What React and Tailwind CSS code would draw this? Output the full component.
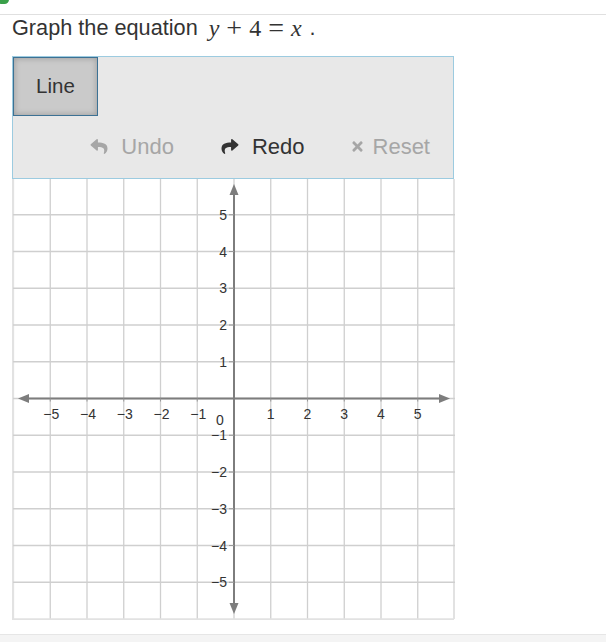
import { FaReply, FaShare, FaTimes } from 'react-icons/fa'

const CELL = 36.75
const X0 = 221
const Y0 = 219.5
const ticks = [-6, -5, -4, -3, -2, -1, 0, 1, 2, 3, 4, 5, 6]
const labels = [-5, -4, -3, -2, -1, 1, 2, 3, 4, 5]

const fmt = (n) => (n < 0 ? '\u2212' + Math.abs(n) : String(n))

const Graph = () => {
    return (
        <svg width="442" height="440" viewBox="0 0 442 440" className="block">
            {ticks.map((t) => (
                <line key={'v' + t} x1={X0 + t * CELL} y1="0" x2={X0 + t * CELL} y2="440"
                    stroke={Math.abs(t) === 6 ? '#e2e2e2' : '#cfcfcf'} strokeWidth="1.3" />
            ))}
            {ticks.map((t) => (
                <line key={'h' + t} x1="0" y1={Y0 - t * CELL} x2="442" y2={Y0 - t * CELL}
                    stroke={Math.abs(t) === 6 ? '#e2e2e2' : '#cfcfcf'} strokeWidth="1.3" />
            ))}

            {/* axes */}
            <line x1="12" y1={Y0} x2="430" y2={Y0} stroke="#7d7d7d" strokeWidth="2" />
            <line x1={X0} y1="14" x2={X0} y2="426" stroke="#7d7d7d" strokeWidth="2" />
            <polygon points={`5,${Y0} 16,${Y0 - 4.5} 16,${Y0 + 4.5}`} fill="#7d7d7d" />
            <polygon points={`437,${Y0} 426,${Y0 - 4.5} 426,${Y0 + 4.5}`} fill="#7d7d7d" />
            <polygon points={`${X0},5 ${X0 - 4.5},16 ${X0 + 4.5},16`} fill="#7d7d7d" />
            <polygon points={`${X0},435 ${X0 - 4.5},424 ${X0 + 4.5},424`} fill="#7d7d7d" />

            {labels.map((t) => (
                <line key={'tx' + t} x1={X0 + t * CELL} y1={Y0} x2={X0 + t * CELL} y2={Y0 + 3}
                    stroke="#9a9a9a" strokeWidth="1" />
            ))}
            {labels.map((t) => (
                <line key={'ty' + t} x1={X0 - 5} y1={Y0 - t * CELL} x2={X0} y2={Y0 - t * CELL}
                    stroke="#9a9a9a" strokeWidth="1" />
            ))}

            <g fontFamily="'Liberation Sans', Arial, sans-serif" fontSize="14" fill="#333">
                {labels.map((t) => (
                    <text key={'lx' + t} x={X0 + t * CELL + (t < 0 ? 1 : 0)} y={Y0 + 20} textAnchor="middle">
                        {fmt(t)}
                    </text>
                ))}
                {labels.map((t) => (
                    <text key={'ly' + t} x={X0 - 7} y={Y0 - t * CELL + 5} textAnchor="end">
                        {fmt(t)}
                    </text>
                ))}
                <text x={X0 - 14} y={Y0 + 26} textAnchor="middle">0</text>
            </g>
        </svg>
    )
}

const App = () => {
    return (
        <div className="relative w-[606px] h-[642px] bg-white overflow-hidden text-[#333]"
            style={{ fontFamily: "'Liberation Sans', Arial, sans-serif" }}>
            <div className="absolute -top-[5px] -left-[3px] w-[12px] h-[9px] rounded-full bg-[#3aa04a]"></div>

            <div className="h-[15px] border-b border-[#e0e0e0]"></div>

            <div className="flex items-center h-[26px] pl-[12px] text-[21.7px] leading-[26px]">
                <span>Graph the equation</span>
                <span className="ml-[11px] flex items-center text-[24px] leading-[26px]"
                    style={{ fontFamily: "'Liberation Serif', 'Times New Roman', serif" }}>
                    <span className="italic">y</span>
                    <span className="mx-[7px] text-[28px]">+</span>
                    <span>4</span>
                    <span className="mx-[7px] text-[28px]">=</span>
                    <span className="italic">x</span>
                </span>
                <span className="ml-[8px]">.</span>
            </div>

            <div className="ml-[12px] mt-[15px] w-[442px]">
                <div className="h-[123px] bg-[#e8e8e8] border border-[#9ccbe0] flex flex-col">
                    <div className="flex">
                        <div className="w-[85px] h-[59px] flex items-center justify-center bg-[#cacaca] border border-[#3c7194]
                            shadow-[inset_0_0_6px_rgba(0,0,0,0.25)] text-[20.5px]">
                            Line
                        </div>
                    </div>
                    <div className="flex-1 flex items-center justify-end gap-[46px] pr-[23px] text-[22px] pb-[2px]">
                        <div className="flex items-center gap-[12px] text-[#a6a6a6]">
                            <FaReply className="w-[20px] h-[17px]" />
                            <span>Undo</span>
                        </div>
                        <div className="flex items-center gap-[12px] text-[#333]">
                            <FaShare className="w-[20px] h-[17px]" />
                            <span>Redo</span>
                        </div>
                        <div className="flex items-center gap-[9px] text-[#a6a6a6]">
                            <FaTimes className="w-[13px] h-[15px]" />
                            <span>Reset</span>
                        </div>
                    </div>
                </div>
                <div className="border-x border-b border-[#e2e2e2] w-[442px]">
                    <Graph />
                </div>
            </div>

            <div className="mt-[14px] border-t border-[#e6e6e6] bg-[#f4f4f4] h-[20px]"></div>
        </div>
    )
}

export default App
